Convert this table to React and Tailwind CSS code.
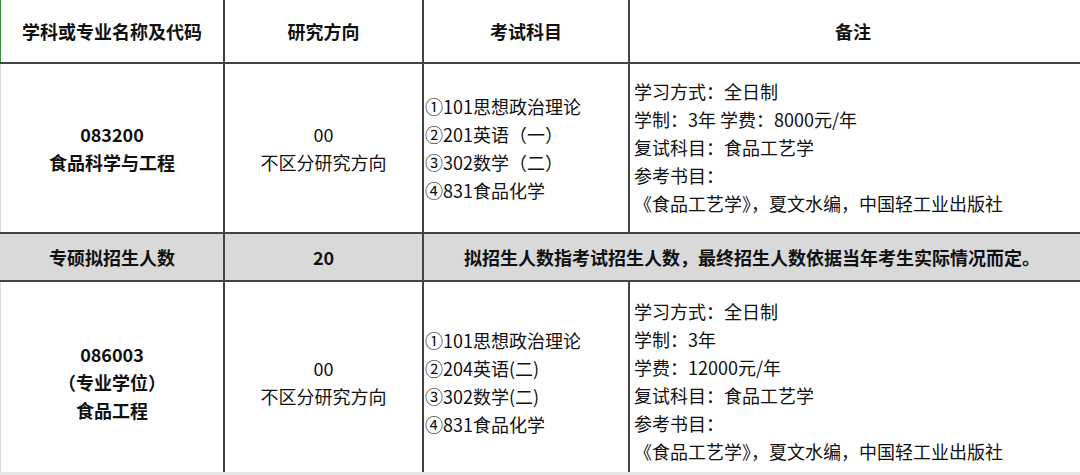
const font = { fontFamily: '"Noto Sans CJK SC", "Noto Sans", sans-serif' };

const rows = [
  {
    code: ["083200", "食品科学与工程"],
    subjects: ["①101思想政治理论", "②201英语（一）", "③302数学（二）", "④831食品化学"],
    notes: [
      "学习方式：全日制",
      "学制：3年 学费：8000元/年",
      "复试科目：食品工艺学",
      "参考书目：",
      "《食品工艺学》，夏文水编，中国轻工业出版社",
    ],
  },
  {
    code: ["086003", "（专业学位）", "食品工程"],
    subjects: ["①101思想政治理论", "②204英语(二)", "③302数学(二)", "④831食品化学"],
    notes: [
      "学习方式：全日制",
      "学制：3年",
      "学费：12000元/年",
      "复试科目：食品工艺学",
      "参考书目：",
      "《食品工艺学》，夏文水编，中国轻工业出版社",
    ],
  },
];

function Lines({ items, className }) {
  return (
    <div className={className}>
      {items.map((t, i) => (
        <div key={i}>{t}</div>
      ))}
    </div>
  );
}

function DataRow({ row, h, offset }) {
  const cell = "bg-white flex items-center " + offset;
  return (
    <>
      <div className={cell + " justify-center text-center font-semibold border-l border-[#dcdcdc]"} style={{ height: h }}>
        <Lines items={row.code} />
      </div>
      <div className={cell + " justify-center text-center"}>
        <Lines items={["00", "不区分研究方向"]} />
      </div>
      <div className={cell + " pl-[1px]"}>
        <Lines items={row.subjects} />
      </div>
      <div className={cell + " pl-[4px]"}>
        <Lines items={row.notes} className="-mt-[3px]" />
      </div>
    </>
  );
}

export default function App() {
  return (
    <div className="w-[1080px] h-[475px] overflow-hidden bg-[#e6e6e6] text-[18px] leading-[28px] text-[#111]" style={font}>
      <div className="grid grid-cols-[223px_197px_204px_1fr] gap-[2px] bg-[#444]">
        <div className="bg-white h-[62px] flex items-center justify-center font-semibold border-l border-[#3f8f3f] pb-[1px]">
          学科或专业名称及代码
        </div>
        <div className="bg-white flex items-center justify-center font-semibold">研究方向</div>
        <div className="bg-white flex items-center justify-center font-semibold">考试科目</div>
        <div className="bg-white flex items-center justify-center font-semibold pr-[4px]">备注</div>

        <DataRow row={rows[0]} h={168} offset="" />

        <div className="bg-[#d9d9d9] h-[46px] flex items-center justify-center font-semibold border-l border-[#dcdcdc]">
          专硕拟招生人数
        </div>
        <div className="bg-[#d9d9d9] flex items-center justify-center font-semibold">20</div>
        <div className="col-span-2 bg-[#d9d9d9] flex items-center justify-center font-semibold">
          拟招生人数指考试招生人数，最终招生人数依据当年考生实际情况而定。
        </div>

        <DataRow row={rows[1]} h={190} offset="pt-[10px]" />
      </div>
    </div>
  );
}
